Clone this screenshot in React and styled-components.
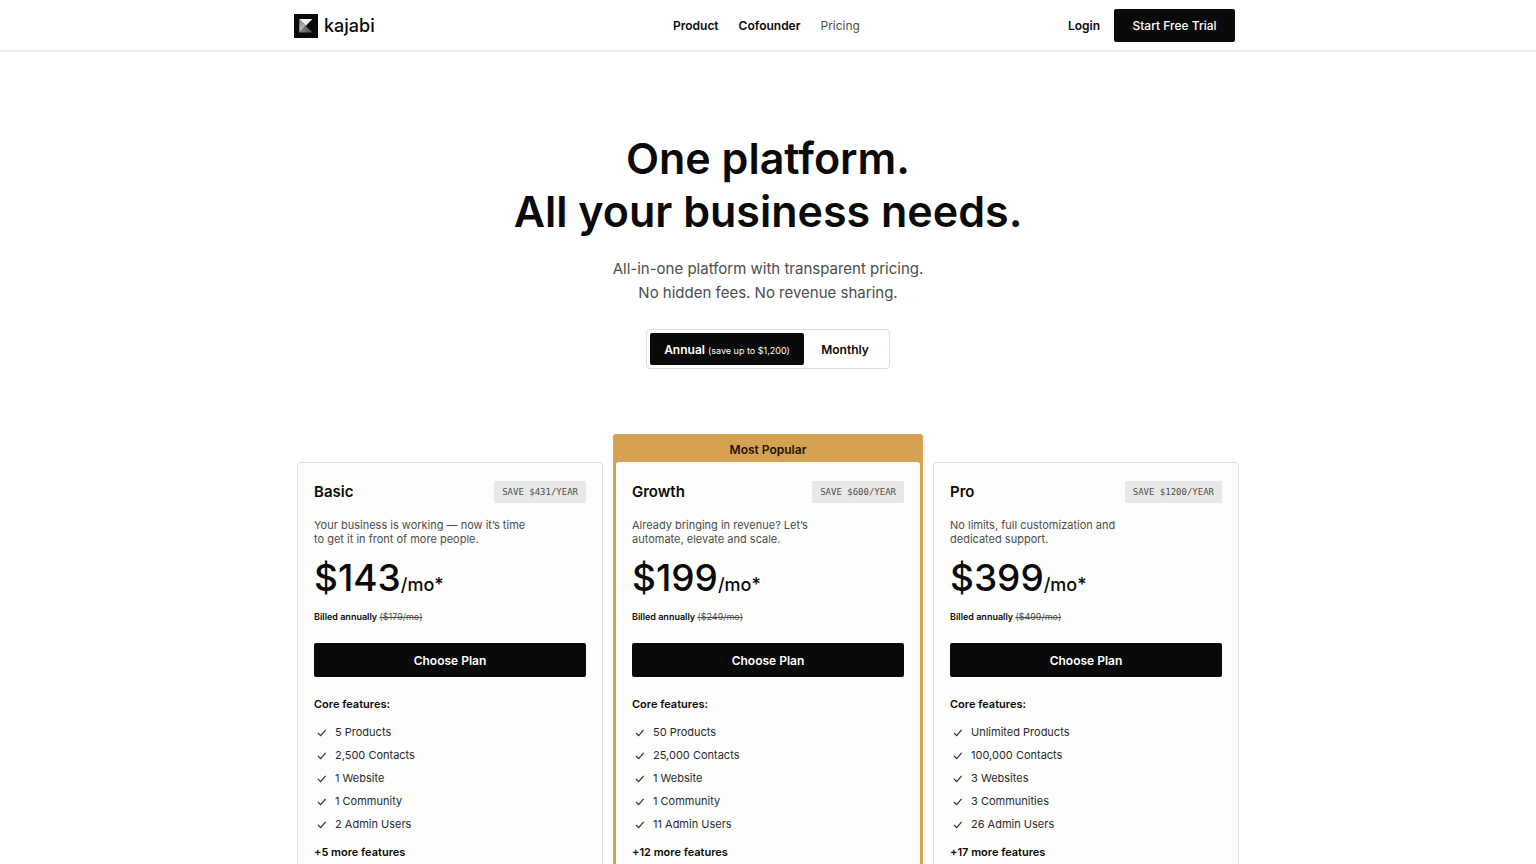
import React from "react";
import styled, { createGlobalStyle } from "styled-components";

const GlobalStyle = createGlobalStyle`
  *, *::before, *::after { box-sizing: border-box; }
  body {
    margin: 0;
    background: #fff;
    color: #0a0a0a;
    font-family: Inter, "Liberation Sans", sans-serif;
    font-size: 12px;
  }
  h1, h2, h3, p, ul { margin: 0; padding: 0; }
  a { color: inherit; text-decoration: none; }
  button { font-family: inherit; cursor: pointer; }
`;

const Header = styled.header`
  border-bottom: 2px solid #ececec;
  background: #fff;
`;

const HeaderInner = styled.div`
  display: grid;
  grid-template-columns: 1fr auto 1fr;
  align-items: center;
  max-width: 948px;
  height: 50px;
  margin: 0 auto;
  padding: 1px 7px 0 0;
`;

const LogoLink = styled.a`
  display: flex;
  align-items: center;
  gap: 6px;
  font-size: 18px;
  line-height: 23px;
  font-weight: 500;
  justify-self: start;
`;

const Nav = styled.nav`
  display: flex;
  gap: 20px;
  padding-left: 4px;
`;

const NavLink = styled.a`
  font-size: 12px;
  line-height: 17px;
  font-weight: ${(p) => (p.$current ? 400 : 600)};
  color: ${(p) => (p.$current ? "#4d4d4d" : "#0a0a0a")};
`;

const Account = styled.div`
  display: flex;
  align-items: center;
  justify-self: end;
  gap: 14px;
`;

const TrialButton = styled.button`
  width: 121px;
  height: 33px;
  padding: 0;
  border: 0;
  border-radius: 2px;
  background: #0a0a0a;
  color: #fff;
  font-size: 12px;
  line-height: 17px;
  font-weight: 500;
`;

const Hero = styled.section`
  display: flex;
  flex-direction: column;
  align-items: center;
  padding-top: 80px;
  text-align: center;
`;

const Title = styled.h1`
  font-size: 43px;
  line-height: 53px;
  font-weight: 600;
`;

const Subtitle = styled.p`
  padding: 19px 0 24px;
  color: #4d4d4d;
  font-size: 15px;
  line-height: 24px;
`;

const Toggle = styled.div`
  display: flex;
  padding: 3px;
  border: 1px solid #dedede;
  border-radius: 4px;
`;

const ToggleOption = styled.button`
  width: ${(p) => (p.$active ? 154 : 82)}px;
  height: 32px;
  padding: 0;
  border: 0;
  border-radius: 2px;
  background: ${(p) => (p.$active ? "#0a0a0a" : "transparent")};
  color: ${(p) => (p.$active ? "#fff" : "#0a0a0a")};
  font-size: 12px;
  font-weight: 600;
  white-space: nowrap;
`;

const Saving = styled.span`
  font-size: 9px;
  font-weight: 400;
`;

const Plans = styled.section`
  display: grid;
  grid-template-columns: repeat(3, minmax(0, 1fr));
  gap: 12px;
  max-width: 942px;
  margin: 65px auto 0;
`;

const PlanSlot = styled.div`
  display: flex;
  flex-direction: column;
  margin: ${(p) => (p.$featured ? "0 -2px" : "28px 0 0")};
  padding: ${(p) => (p.$featured ? "0 3px 3px" : "0")};
  border-radius: 3px;
  background: ${(p) => (p.$featured ? "#d6a150" : "transparent")};
`;

const Banner = styled.p`
  padding-top: 7px;
  height: 28px;
  color: #1d1305;
  font-size: 12px;
  line-height: 17px;
  font-weight: 600;
  text-align: center;
`;

const Card = styled.article`
  flex: 1;
  padding: 18px 16px 24px;
  border: 1px solid ${(p) => (p.$featured ? "#fdfdfb" : "#dedede")};
  border-width: ${(p) => (p.$featured ? "1px 0" : "1px")};
  border-radius: 3px;
  background: #fdfdfb;
`;

const CardHead = styled.div`
  display: flex;
  align-items: center;
  justify-content: space-between;
  height: 22px;
`;

const PlanName = styled.h2`
  font-size: 15px;
  line-height: 22px;
  font-weight: 600;
`;

const Badge = styled.span`
  padding: 0 8px;
  border-radius: 1px;
  background: #e9e8e7;
  color: #4d4d4d;
  font-family: "DejaVu Sans Mono", monospace;
  font-size: 9px;
  line-height: 22px;
`;

const Summary = styled.p`
  padding-top: 15px;
  color: #4d4d4d;
  font-size: 11px;
  line-height: 14px;
  white-space: pre-line;
`;

const Price = styled.p`
  padding-top: 8px;
  font-size: 37px;
  line-height: 48px;
  font-weight: 500;
`;

const Period = styled.span`
  font-size: 18px;
`;

const Billing = styled.p`
  padding-top: 1px;
  font-size: 9px;
  line-height: 14px;
  font-weight: 600;
`;

const OldPrice = styled.s`
  color: #4d4d4d;
  font-weight: 400;
`;

const ChooseButton = styled.button`
  width: 100%;
  height: 34px;
  margin-top: 19px;
  padding: 0;
  border: 0;
  border-radius: 2px;
  background: #0a0a0a;
  color: #fff;
  font-size: 12px;
  font-weight: 600;
`;

const FeatureHeading = styled.h3`
  padding-top: 19px;
  font-size: 11px;
  line-height: 16px;
  font-weight: 600;
`;

const FeatureList = styled.ul`
  padding-top: 9px;
  list-style: none;
`;

const Feature = styled.li`
  display: flex;
  align-items: center;
  gap: 8px;
  padding-left: 3px;
  color: #2b2b2b;
  font-size: 11px;
  line-height: 23px;
`;

const More = styled.p`
  padding-top: 8px;
  font-size: 11px;
  line-height: 16px;
  font-weight: 600;
`;

const LogoMark = () => (
  <svg width="24" height="24" viewBox="0 0 24 24" aria-hidden="true">
    <defs>
      <linearGradient id="facet-left" x1="0" y1="0" x2="0" y2="1">
        <stop offset="0" stopColor="#8c8c8c" />
        <stop offset="1" stopColor="#c8c8c8" />
      </linearGradient>
      <linearGradient id="facet-base" x1="0" y1="0" x2="1" y2="0">
        <stop offset="0" stopColor="#8a8a8a" />
        <stop offset="1" stopColor="#4c4c4c" />
      </linearGradient>
    </defs>
    <rect width="24" height="24" fill="#0a0a0a" />
    <path d="M5.300 5v13.500l6.500-6.800z" fill="url(#facet-left)" />
    <path d="M5.300 5h13.200l-6.700 6.700z" fill="#efefef" />
    <path d="M5.300 18.500l6.500-6.800 6.700 6.800z" fill="url(#facet-base)" />
  </svg>
);

const CheckIcon = () => (
  <svg width="10" height="10" viewBox="0 0 10 10" fill="none" stroke="#333" strokeWidth="1.200" aria-hidden="true">
    <path d="M1 5L3.700 7.600L8.600 1.900" />
  </svg>
);

const plans = [
  {
    name: "Basic",
    save: "SAVE $431/YEAR",
    summary: "Your business is working — now it’s time\nto get it in front of more people.",
    price: "$143",
    old: "($179/mo)",
    features: ["5 Products", "2,500 Contacts", "1 Website", "1 Community", "2 Admin Users"],
    more: "+5 more features",
  },
  {
    name: "Growth",
    featured: true,
    save: "SAVE $600/YEAR",
    summary: "Already bringing in revenue? Let’s\nautomate, elevate and scale.",
    price: "$199",
    old: "($249/mo)",
    features: ["50 Products", "25,000 Contacts", "1 Website", "1 Community", "11 Admin Users"],
    more: "+12 more features",
  },
  {
    name: "Pro",
    save: "SAVE $1200/YEAR",
    summary: "No limits, full customization and\ndedicated support.",
    price: "$399",
    old: "($499/mo)",
    features: ["Unlimited Products", "100,000 Contacts", "3 Websites", "3 Communities", "26 Admin Users"],
    more: "+17 more features",
  },
];

const Plan = ({ plan }) => (
  <PlanSlot $featured={plan.featured}>
    {plan.featured && <Banner>Most Popular</Banner>}
    <Card $featured={plan.featured}>
      <CardHead>
        <PlanName>{plan.name}</PlanName>
        <Badge>{plan.save}</Badge>
      </CardHead>
      <Summary>{plan.summary}</Summary>
      <Price>
        {plan.price}
        <Period>/mo*</Period>
      </Price>
      <Billing>
        Billed annually <OldPrice>{plan.old}</OldPrice>
      </Billing>
      <ChooseButton type="button">Choose Plan</ChooseButton>
      <FeatureHeading>Core features:</FeatureHeading>
      <FeatureList>
        {plan.features.map((feature) => (
          <Feature key={feature}>
            <CheckIcon />
            {feature}
          </Feature>
        ))}
      </FeatureList>
      <More>{plan.more}</More>
    </Card>
  </PlanSlot>
);

export default function App() {
  return (
    <>
      <GlobalStyle />
      <Header>
        <HeaderInner>
          <LogoLink href="#home">
            <LogoMark />
            kajabi
          </LogoLink>
          <Nav>
            <NavLink href="#product">Product</NavLink>
            <NavLink href="#cofounder">Cofounder</NavLink>
            <NavLink href="#pricing" $current aria-current="page">Pricing</NavLink>
          </Nav>
          <Account>
            <NavLink href="#login">Login</NavLink>
            <TrialButton type="button">Start Free Trial</TrialButton>
          </Account>
        </HeaderInner>
      </Header>
      <main>
        <Hero>
          <Title>
            One platform.
            <br />
            All your business needs.
          </Title>
          <Subtitle>
            All-in-one platform with transparent pricing.
            <br />
            No hidden fees. No revenue sharing.
          </Subtitle>
          <Toggle role="group" aria-label="Billing period">
            <ToggleOption type="button" $active aria-pressed="true">
              Annual <Saving>(save up to $1,200)</Saving>
            </ToggleOption>
            <ToggleOption type="button" aria-pressed="false">Monthly</ToggleOption>
          </Toggle>
        </Hero>
        <Plans>
          {plans.map((plan) => (
            <Plan key={plan.name} plan={plan} />
          ))}
        </Plans>
      </main>
    </>
  );
}
